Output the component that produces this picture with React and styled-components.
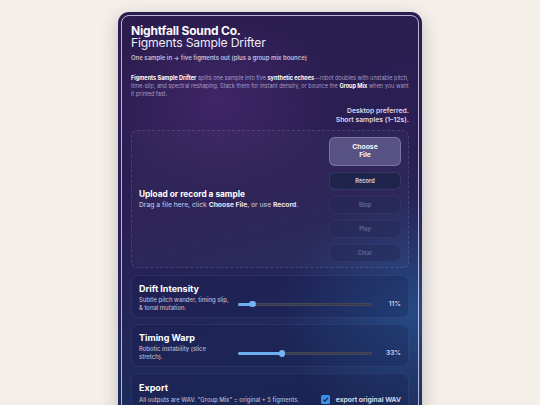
import React from 'react'
import styled, { createGlobalStyle } from 'styled-components'

const GlobalStyle = createGlobalStyle`
  html, body {
    margin: 0;
    padding: 0;
    background: #f4efe9;
    font-family: Inter, "Noto Sans", sans-serif;
    -webkit-font-smoothing: antialiased;
  }
`

const Page = styled.div`
  display: flex;
  justify-content: center;
  padding-top: 12px;
  height: 393px;
  overflow: hidden;
`

const Card = styled.div`
  width: 304px;
  padding: 3px;
  box-sizing: border-box;
  border-radius: 11px;
  background:
    radial-gradient(ellipse 170px 130px at 100px 90px, rgba(85, 45, 125, 0.5), transparent 70%),
    radial-gradient(ellipse 200px 170px at 300px 300px, rgba(45, 100, 165, 0.55), transparent 70%),
    linear-gradient(165deg, #2a1c4c 0%, #2a2056 45%, #1f2a5c 75%, #1c2a58 100%);
  box-shadow: 0 6px 18px rgba(40, 30, 60, 0.25);
  height: 420px;
`

const Inner = styled.div`
  border: 1px solid rgba(235, 228, 255, 0.75);
  border-radius: 8px;
  padding: 8px 9px 0;
  height: 100%;
  box-sizing: border-box;
  display: flex;
  flex-direction: column;
`

const Brand = styled.h1`
  margin: 0;
  font-size: 12px;
  line-height: 13px;
  font-weight: 700;
  letter-spacing: -0.015em;
  color: #fbfaff;
`

const Product = styled.h2`
  margin: 0;
  font-size: 12.2px;
  line-height: 12px;
  font-weight: 400;
  letter-spacing: -0.015em;
  color: #eeeaf8;
`

const Tagline = styled.p`
  margin: 4.5px 0 0;
  font-size: 6px;
  line-height: 8px;
  font-weight: 600;
  color: #c4bedc;
`

const Blurb = styled.p`
  margin: 12px 0 0;
  font-size: 5.55px;
  line-height: 8.4px;
  color: rgba(205, 198, 230, 0.75);

  b {
    color: #ffffff;
    font-weight: 700;
  }
`

const Note = styled.p`
  margin: 7.5px 0 0;
  text-align: right;
  font-size: 6.8px;
  line-height: 9px;
  font-weight: 600;
  color: #dcd8ea;
`

const Stack = styled.div`
  display: flex;
  flex-direction: column;
  gap: 6.7px;
  margin-top: 6px;
`

const DropZone = styled.div`
  display: flex;
  align-items: center;
  justify-content: space-between;
  height: 138px;
  box-sizing: border-box;
  padding: 6px 7px;
  border: 1px dashed rgba(200, 200, 240, 0.16);
  border-radius: 6px;
  background: rgba(255, 255, 255, 0.025);
`

const DropText = styled.div`
  color: #ffffff;

  h3 {
    margin: 0;
    font-size: 8.3px;
    line-height: 10px;
    font-weight: 700;
  }

  p {
    margin: 1px 0 0;
    font-size: 6.75px;
    font-weight: 500;
    color: #bdbad6;
  }

  b {
    color: #e6e4f4;
    font-weight: 700;
  }
`

const Buttons = styled.div`
  display: flex;
  flex-direction: column;
  gap: 6px;
  width: 72px;
`

const Btn = styled.button`
  font-family: inherit;
  height: ${({ $tall }) => ($tall ? '29px' : '18px')};
  border-radius: 6px;
  font-size: ${({ $tall }) => ($tall ? '6.8px' : '5.6px')};
  line-height: 8.3px;
  font-weight: 700;
  padding: 0 17px;
  cursor: pointer;
  border: 1px solid
    ${({ $kind }) =>
      $kind === 'primary'
        ? 'rgba(210, 210, 255, 0.28)'
        : $kind === 'dark'
        ? 'rgba(150, 160, 220, 0.16)'
        : 'rgba(150, 160, 220, 0.08)'};
  background: ${({ $kind }) =>
    $kind === 'primary'
      ? 'rgba(155, 155, 200, 0.38)'
      : $kind === 'dark'
      ? '#1f244c'
      : 'rgba(35, 40, 85, 0.45)'};
  color: ${({ $kind }) =>
    $kind === 'primary' ? '#f2f1fb' : $kind === 'dark' ? '#c8c8de' : '#5d6290'};
`

const Panel = styled.section`
  border: 1px solid rgba(170, 180, 240, 0.1);
  border-radius: 7px;
  background: rgba(20, 25, 70, 0.22);
  padding: ${({ $top }) => $top || 7}px 7px 4px;
  box-sizing: border-box;
`

const PanelTitle = styled.h3`
  margin: 0;
  font-size: 9px;
  line-height: 11px;
  font-weight: 700;
  color: #ffffff;
`

const Row = styled.div`
  display: grid;
  grid-template-columns: 96px 1fr 26px;
  column-gap: 3px;
  align-items: center;
  margin-top: 2px;
`

const Desc = styled.p`
  margin: 0;
  font-size: 5.9px;
  line-height: 8.3px;
  font-weight: 500;
  color: #b9b8d2;
`

const Track = styled.div`
  position: relative;
  height: 3px;
  border-radius: 2px;
  background: #383b4d;
  box-shadow: inset 0 0 0 0.5px rgba(255, 255, 255, 0.12);
`

const Fill = styled.div`
  height: 100%;
  border-radius: 2px;
  background: #6cb0f2;
`

const Thumb = styled.div`
  position: absolute;
  top: 50%;
  width: 6.5px;
  height: 6.5px;
  margin: -3.25px 0 0 -3.25px;
  border-radius: 50%;
  background: #72b4f4;
`

const Value = styled.span`
  text-align: right;
  font-size: 6.6px;
  font-weight: 600;
  color: #d4d4e6;
`

const ExportRow = styled.div`
  display: flex;
  justify-content: space-between;
  align-items: center;
  margin-top: 2px;
`

const CheckLabel = styled.label`
  display: flex;
  align-items: center;
  gap: 6px;
  font-size: 6.8px;
  font-weight: 600;
  color: #e2e2f0;
`

const Box = styled.span`
  width: 9px;
  height: 9px;
  border-radius: 1.5px;
  background: #3b8de8;
  display: flex;
  align-items: center;
  justify-content: center;
`

const Slider = ({ pct }) => (
  <Track>
    <Fill style={{ width: `${pct}%` }} />
    <Thumb style={{ left: `${pct}%` }} />
  </Track>
)

const SettingPanel = ({ title, lines, pct, value }) => (
  <Panel>
    <PanelTitle>{title}</PanelTitle>
    <Row>
      <Desc>
        {lines[0]}
        <br />
        {lines[1]}
      </Desc>
      <Slider pct={pct} />
      <Value>{value}</Value>
    </Row>
  </Panel>
)

export default function App () {
  return (
    <>
      <GlobalStyle />
      <Page>
        <Card>
          <Inner>
            <Brand>Nightfall Sound Co.</Brand>
            <Product>Figments Sample Drifter</Product>
            <Tagline>One sample in → five figments out (plus a group mix bounce)</Tagline>
            <Blurb>
              <b>Figments Sample Drifter</b> splits one sample into five <b>synthetic echoes</b>—robot
              doubles with unstable pitch, time-slip, and spectral reshaping. Stack them for instant
              density, or bounce the <b>Group Mix</b> when you want it printed fast.
            </Blurb>
            <Note>
              Desktop preferred.
              <br />
              Short samples (1–12s).
            </Note>
            <Stack>
              <DropZone>
                <DropText>
                  <h3>Upload or record a sample</h3>
                  <p>
                    Drag a file here, click <b>Choose File</b>, or use <b>Record</b>.
                  </p>
                </DropText>
                <Buttons>
                  <Btn $tall $kind='primary'>Choose File</Btn>
                  <Btn $kind='dark'>Record</Btn>
                  <Btn $kind='off'>Stop</Btn>
                  <Btn $kind='off'>Play</Btn>
                  <Btn $kind='off'>Clear</Btn>
                </Buttons>
              </DropZone>
              <SettingPanel
                title='Drift Intensity'
                lines={['Subtle pitch wander, timing slip,', '& tonal mutation.']}
                pct={11}
                value='11%'
              />
              <SettingPanel
                title='Timing Warp'
                lines={['Robotic instability (slice', 'stretch).']}
                pct={33}
                value='33%'
              />
              <Panel $top={8}>
                <PanelTitle>Export</PanelTitle>
                <ExportRow>
                  <Desc>All outputs are WAV. "Group Mix" = original + 5 figments.</Desc>
                  <CheckLabel>
                    <Box>
                      <svg width='7' height='7' viewBox='0 0 10 10'>
                        <path d='M2 5.2 L4.2 7.4 L8.2 2.6' fill='none' stroke='#0f1a3a' strokeWidth='1.6' />
                      </svg>
                    </Box>
                    export original WAV
                  </CheckLabel>
                </ExportRow>
              </Panel>
            </Stack>
          </Inner>
        </Card>
      </Page>
    </>
  )
}
